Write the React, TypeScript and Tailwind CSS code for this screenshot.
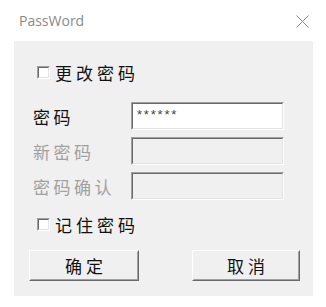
import React from "react";

const cjk = { fontFamily: '"Noto Sans CJK SC", "Liberation Sans", sans-serif' };

function CheckBox() {
  return (
    <span className="inline-block w-[13px] h-[13px] bg-white border border-t-[#a0a0a0] border-l-[#a0a0a0] border-r-white border-b-white">
      <span className="block w-full h-full border border-t-[#696969] border-l-[#696969] border-r-[#e3e3e3] border-b-[#e3e3e3]" />
    </span>
  );
}

function Field({ label, disabled, value }: { label: string; disabled?: boolean; value?: string }) {
  return (
    <div className="flex items-center h-[28px]">
      <div
        className={`w-[117px] pl-[19px] text-[17px] tracking-[3.5px] leading-none whitespace-nowrap ${disabled ? "text-[#a0a0a0]" : "text-[#111]"}`}
        style={cjk}
      >
        {label}
      </div>
      <div
        className={`w-[153px] h-[28px] border border-t-[#a0a0a0] border-l-[#a0a0a0] border-r-white border-b-white ${disabled ? "bg-[#f0f0f0]" : "bg-white"}`}
      >
        <div className="h-full border border-t-[#696969] border-l-[#696969] border-r-[#e3e3e3] border-b-[#e3e3e3] flex items-start pl-[4px] pt-[4px]">
          {value && (
            <span className="text-[13px] leading-none tracking-[1.8px] text-[#444]" style={{ fontFamily: '"Liberation Sans", sans-serif' }}>
              {value}
            </span>
          )}
        </div>
      </div>
    </div>
  );
}

function Btn({ label, w }: { label: string; w: string }) {
  return (
    <div className={`${w} h-[31px] bg-[#f0f0f0] border border-t-white border-l-white border-r-[#696969] border-b-[#696969]`}>
      <div className="h-full flex items-center justify-center pl-[4px] border border-t-[#f0f0f0] border-l-[#f0f0f0] border-r-[#a0a0a0] border-b-[#a0a0a0] text-[17px] tracking-[4px] text-[#111]" style={cjk}>
        {label}
      </div>
    </div>
  );
}

export default function App() {
  return (
    <div className="w-[326px] h-[307px] bg-white flex flex-col">
      <div className="h-[41px] flex items-center justify-between pl-[19px] pr-[17px]">
        <span className="text-[14px] text-[#8a8a8a]" style={{ fontFamily: '"Open Sans", "Liberation Sans", sans-serif' }}>
          PassWord
        </span>
        <svg width="13" height="13" viewBox="0 0 13 13" className="mt-[1px]">
          <path d="M0.5 0.5 L12.5 12.5 M12.5 0.5 L0.5 12.5" stroke="#8a8a8a" strokeWidth="1" />
        </svg>
      </div>
      <div className="mx-[14px] w-[299px] h-[255px] bg-[#f0f0f0] flex flex-col pt-[21px]">
        <div className="flex items-center h-[20px] pl-[23px] gap-[5px]">
          <CheckBox />
          <span className="text-[17px] tracking-[4px] leading-none text-[#111]" style={cjk}>更改密码</span>
        </div>
        <div className="flex flex-col gap-[7px] mt-[20px]">
          <Field label="密码" value="******" />
          <Field label="新密码" disabled />
          <Field label="密码确认" disabled />
        </div>
        <div className="flex items-center h-[20px] pl-[23px] gap-[5px] mt-[14px]">
          <CheckBox />
          <span className="text-[17px] tracking-[4px] leading-none text-[#111]" style={cjk}>记住密码</span>
        </div>
        <div className="flex justify-between pl-[15px] pr-[13px] mt-[16px]">
          <Btn label="确定" w="w-[110px]" />
          <Btn label="取消" w="w-[108px]" />
        </div>
      </div>
    </div>
  );
}
